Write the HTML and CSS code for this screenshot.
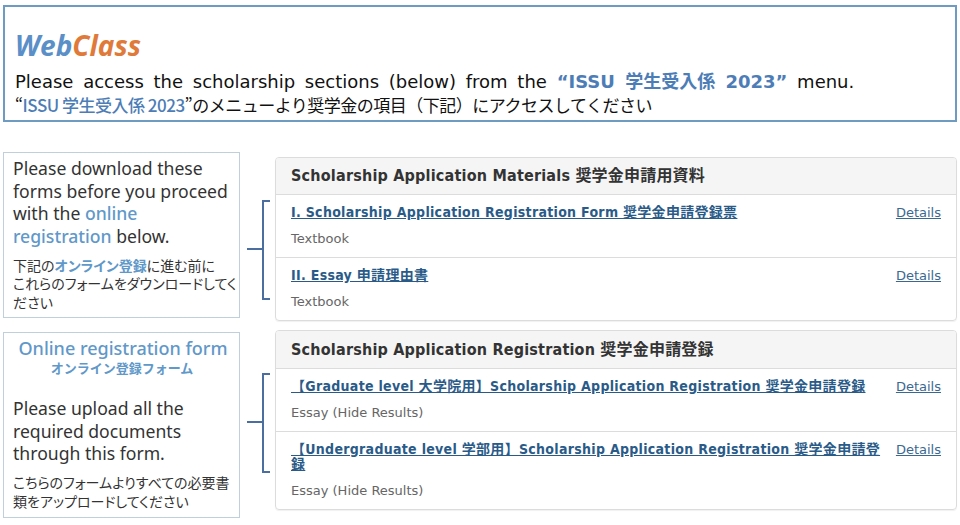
FILE: index.html
```html
<!DOCTYPE html>
<html lang="ja">
<head>
<meta charset="utf-8">
<title>WebClass</title>
<link rel="stylesheet" href="styles.css">
</head>
<body>
<div class="banner">
  <div class="logo"><span class="web">Web</span><span class="cls">Class</span></div>
  <p class="ban-en">Please access the scholarship sections (below) from the <span class="hl">“ISSU 学生受入係 2023”</span> menu.</p>
  <p class="ban-jp">“<span class="hl">ISSU 学生受入係 2023</span>”のメニューより奨学金の項目（下記）にアクセスしてください</p>
</div>

<div class="section sec1">
  <div class="note note1">
    <p class="note-en">Please download these forms before you proceed with the <span class="blue">online registration</span> below.</p>
    <p class="note-jp nowrap">下記の<b class="blue">オンライン登録</b>に進む前に<br>これらのフォームをダウンロードしてく<br>ださい</p>
  </div>
  <div class="brace">
    <svg width="24" height="100" viewBox="0 0 24 100"><path d="M23 1H16V99H23M0 49H16" fill="none" stroke="#4a6e9f" stroke-width="2"/></svg>
  </div>
  <div class="panel panel1">
    <div class="panel-head">Scholarship Application Materials 奨学金申請用資料</div>
    <div class="row">
      <div class="row-main">
        <a class="item" href="#">I. Scholarship Application Registration Form 奨学金申請登録票</a>
        <div class="sub">Textbook</div>
      </div>
      <a class="details" href="#">Details</a>
    </div>
    <div class="row">
      <div class="row-main">
        <a class="item" href="#">II. Essay 申請理由書</a>
        <div class="sub">Textbook</div>
      </div>
      <a class="details" href="#">Details</a>
    </div>
  </div>
</div>

<div class="section sec2">
  <div class="note note2">
    <p class="note-title">Online registration form</p>
    <p class="note-title-jp">オンライン登録フォーム</p>
    <p class="note-en upload">Please upload all the required documents through this form.</p>
    <p class="note-jp">こちらのフォームよりすべての必要書類をアップロードしてください</p>
  </div>
  <div class="brace">
    <svg width="24" height="100" viewBox="0 0 24 100"><path d="M23 1H16V99H23M0 49H16" fill="none" stroke="#4a6e9f" stroke-width="2"/></svg>
  </div>
  <div class="panel panel2">
    <div class="panel-head">Scholarship Application Registration 奨学金申請登録</div>
    <div class="row">
      <div class="row-main">
        <a class="item" href="#">【Graduate level 大学院用】Scholarship Application Registration 奨学金申請登録</a>
        <div class="sub">Essay (Hide Results)</div>
      </div>
      <a class="details" href="#">Details</a>
    </div>
    <div class="row">
      <div class="row-main">
        <a class="item" href="#">【Undergraduate level 学部用】Scholarship Application Registration 奨学金申請登録</a>
        <div class="sub">Essay (Hide Results)</div>
      </div>
      <a class="details" href="#">Details</a>
    </div>
  </div>
</div>
</body>
</html>
```
FILE: styles.css
```css
* { box-sizing: border-box; }
html, body { margin: 0; padding: 0; background: #fff; }
body {
  padding: 5px 3px 0 3px;
  font-family: "DejaVu Sans", "Noto Sans CJK JP", sans-serif;
  color: #333;
}
p { margin: 0; }

.banner {
  border: 2px solid #6e9bc1;
  padding: 22px 10px 3px 10px;
  height: 117px;
}
.logo {
  font-family: "Open Sans", sans-serif;
  font-weight: 700;
  font-style: italic;
  font-size: 28px;
  line-height: 32px;
}
.web { color: #5b8fc7; }
.cls { color: #e07a3a; }
.ban-en {
  margin-top: 9px;
  font-size: 18px;
  line-height: 24px;
  color: #111;
  word-spacing: 4px;
}
.ban-jp {
  font-family: "Noto Sans CJK JP", sans-serif;
  font-size: 17px;
  letter-spacing: -0.5px;
  line-height: 22px;
  color: #111;
}
.hl { color: #4d7db6; font-weight: 700; }
.ban-jp .hl { font-weight: 500; }

.section { display: flex; align-items: flex-start; }
.sec1 { margin-top: 30px; }
.sec2 { margin-top: 9px; }

.note {
  width: 237px;
  flex: none;
  border: 1px solid #bfcfdc;
  padding: 4px 8px 6px 9px;
  font-family: "Noto Sans", "Noto Sans CJK JP", sans-serif;
}
.note1 { height: 166px; }
.note2 { margin-top: 2px; height: 186px; }
.note-en { font-size: 17.6px; line-height: 22.7px; color: #333; }
.note-jp {
  font-family: "Noto Sans CJK JP", sans-serif;
  font-feature-settings: "palt";
  font-size: 14px; line-height: 18.5px; color: #333;
  margin-top: 8px;
}
.nowrap { white-space: nowrap; }
.blue { color: #5f98c9; font-weight: 500; }
.note-jp .blue { font-weight: 700; }
.note-title {
  text-align: center; color: #5f98c9; font-weight: 500;
  font-size: 18px; line-height: 22px;
  margin-right: -2px;
}
.note-title-jp {
  text-align: center; color: #5f98c9; font-weight: 700;
  font-family: "Noto Sans CJK JP", sans-serif;
  font-size: 13px; line-height: 18px;
}
.upload { margin-top: 20px; }

.brace { width: 35px; flex: none; padding-left: 7px; }
.sec1 .brace { margin-top: 48px; }
.sec2 .brace { margin-top: 43px; }
.brace svg { display: block; }

.panel {
  flex: 1;
  border: 1px solid #dcdcdc;
  border-radius: 4px;
  box-shadow: 0 1px 1px rgba(0,0,0,0.06);
  overflow: hidden;
}
.panel1 { margin-top: 5px; }
.panel-head {
  background: #f5f5f5;
  border-bottom: 1px solid #dcdcdc;
  padding: 7px 15px 8px;
  line-height: 21px;
  font-family: "DejaVu Sans Condensed", "DejaVu Sans", "Noto Sans CJK JP", sans-serif;
  font-stretch: condensed;
  font-weight: 700;
  font-size: 16px;
  letter-spacing: 0.2px;
  color: #333;
}
.panel2 .panel-head { padding: 8px 15px 8px; }
.row {
  display: flex;
  align-items: flex-start;
  gap: 14px;
  padding: 10px 15px 9px 15px;
}
.row + .row { border-top: 1px solid #dcdcdc; }
.row-main { flex: 1; min-width: 0; font-size: 14px; line-height: 15px; }
.item {
  font-family: "DejaVu Sans Condensed", "DejaVu Sans", "Noto Sans CJK JP", sans-serif;
  font-stretch: condensed;
  font-weight: 700;
  font-size: 14px;
  line-height: 15px;
  letter-spacing: 0.3px;
  color: #2a5b88;
  text-decoration: underline;
}
.sub {
  margin-top: 10px;
  font-size: 13px;
  line-height: 18px;
  color: #666;
}
.details {
  flex: none;
  font-size: 13px;
  line-height: 15px;
  color: #3b6891;
  text-decoration: underline;
}
```
